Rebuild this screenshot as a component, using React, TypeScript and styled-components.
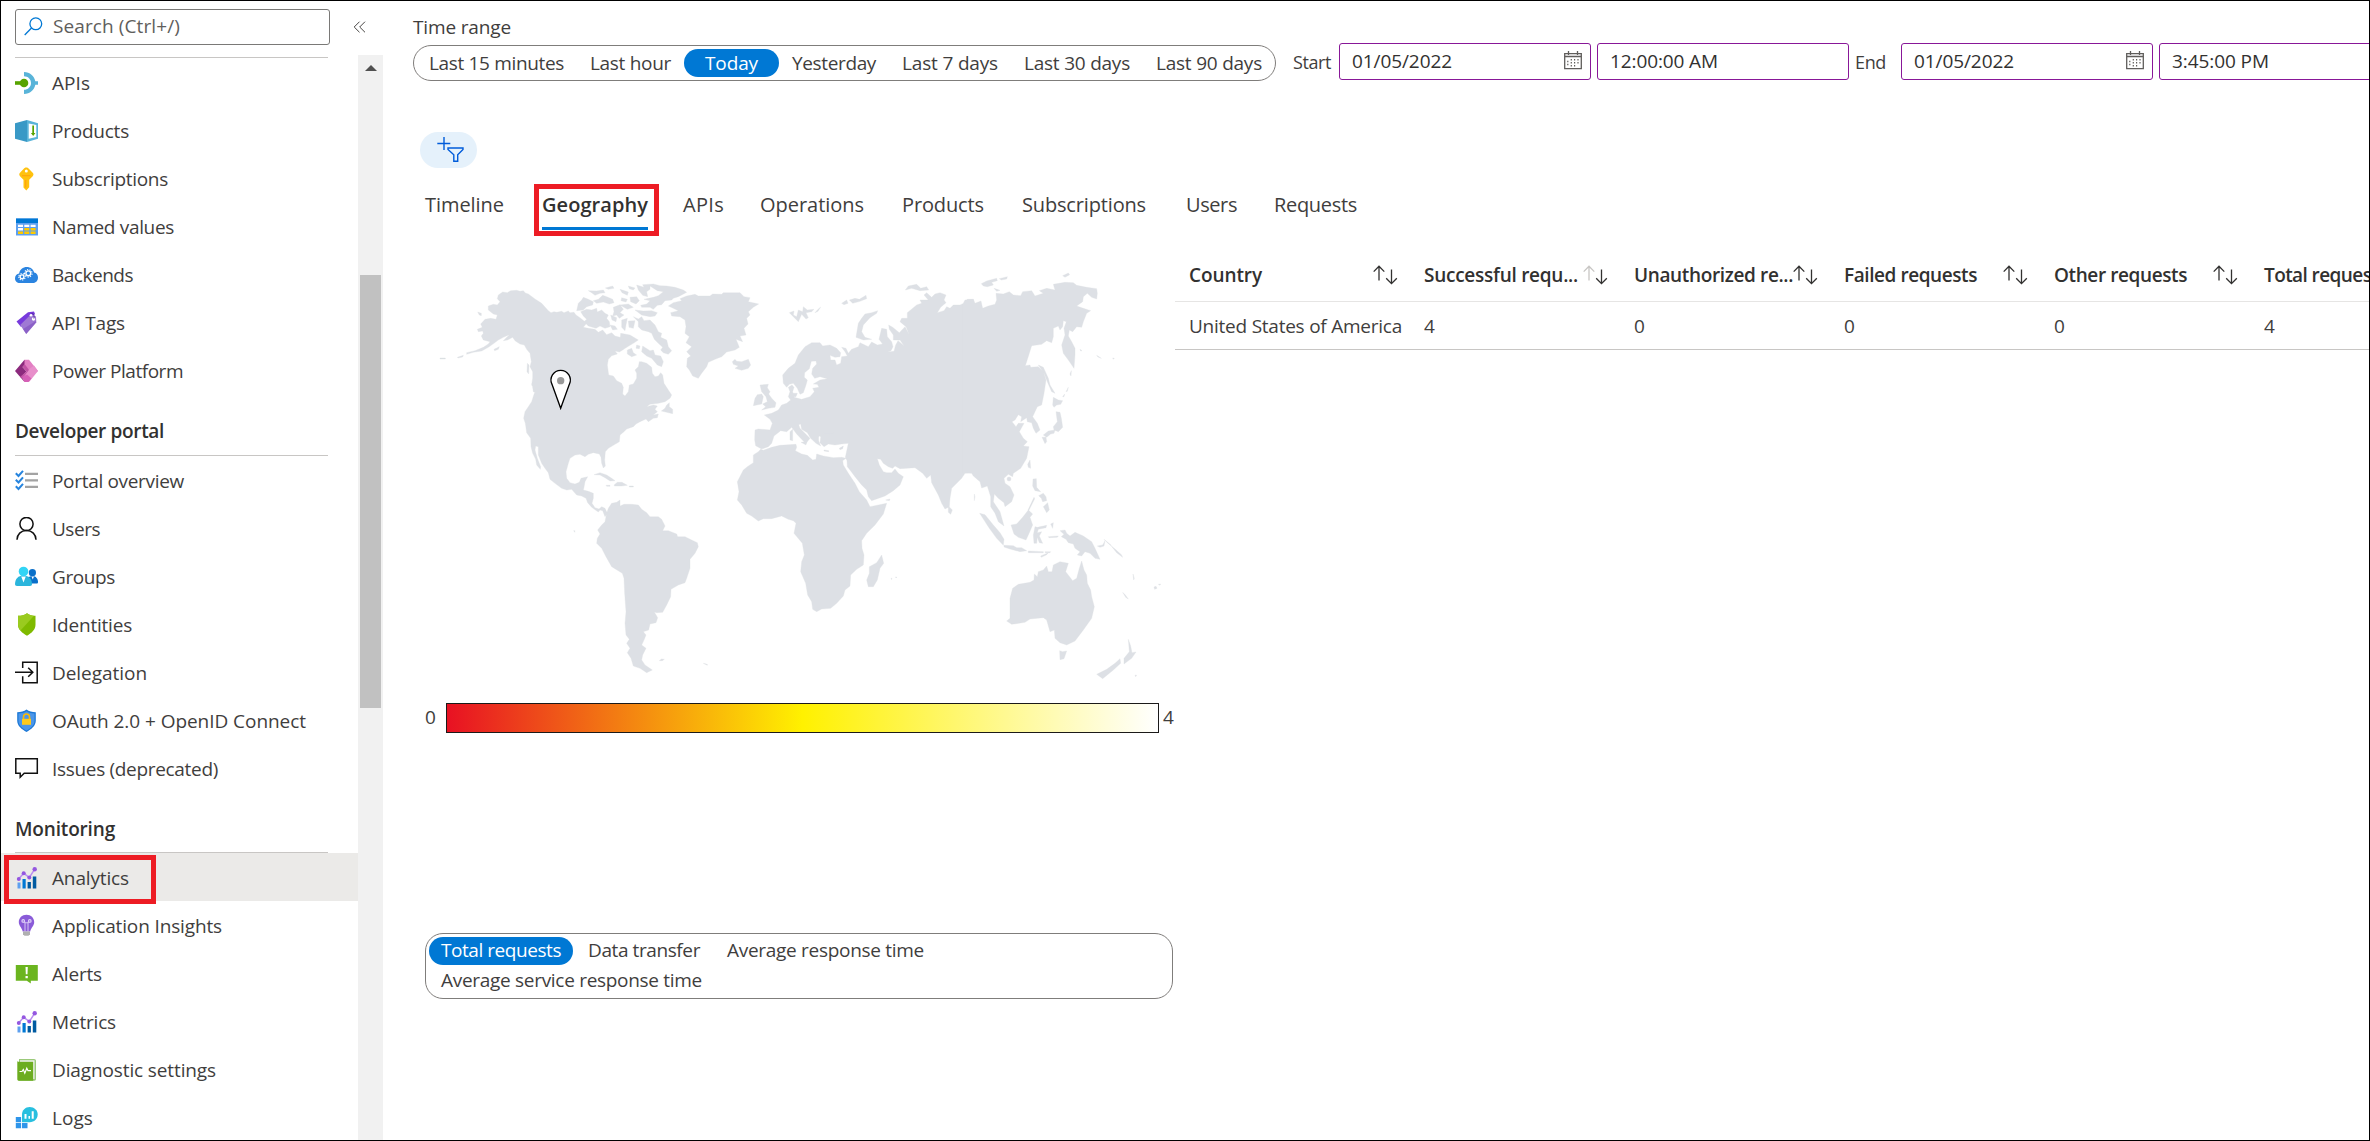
import React, { useLayoutEffect, useRef, useState } from "react";
import styled, { createGlobalStyle } from "styled-components";

const GlobalStyle = createGlobalStyle`
  *, *::before, *::after { box-sizing: border-box; }
  body { margin: 0; background: #fff; }
`;

const Shell = styled.div`
  display: flex;
  width: 2370px;
  height: 1141px;
  border: 1px solid #000;
  overflow: hidden;
  background: #fff;
  color: #3f3e3d;
  font-family: "Open Sans", "Noto Sans", sans-serif;
  font-size: 19px;
  line-height: 28px;
`;

/* ---------- text fitted to a known width by tracking ---------- */

const FitSpan = styled.span<{ $w: number }>`
  display: block;
  flex: none;
  width: ${(p) => p.$w}px;
  white-space: nowrap;
`;

function Fit({ w, children }: { w: number; children: string }) {
  const ref = useRef<HTMLSpanElement>(null);
  const [tracking, setTracking] = useState(0);
  useLayoutEffect(() => {
    const node = ref.current;
    if (node) setTracking((w - node.getBoundingClientRect().width) / children.length);
  }, [w, children]);
  return (
    <FitSpan $w={w}>
      <span ref={ref} style={{ letterSpacing: tracking }}>
        {children}
      </span>
    </FitSpan>
  );
}

/* ---------- sidebar ---------- */

const Sidebar = styled.aside`
  display: flex;
  flex-direction: column;
  flex: none;
  width: 382px;
`;

const SearchRow = styled.div`
  display: flex;
  flex: none;
  height: 54px;
  padding: 8px 0 0 14px;
`;

const SearchBox = styled.div`
  display: flex;
  align-items: center;
  width: 315px;
  height: 36px;
  padding-left: 8px;
  gap: 10px;
  border: 1px solid #7a7977;
  border-radius: 3px;
  color: #605e5c;
  line-height: 32px;
  padding-bottom: 2px;
`;

const Collapse = styled.div`
  margin: 12px 0 0 23px;
  line-height: 0;
`;

const SideBody = styled.div`
  display: flex;
  flex: 1;
  min-height: 0;
`;

const Menu = styled.nav`
  width: 357px;
  padding-top: 2px;
  overflow: hidden;
`;

const Rule = styled.div`
  width: 313px;
  height: 1px;
  margin: 0 0 1px 14px;
  background: #c8c6c4;
`;

const Heading = styled.div<{ $top: number }>`
  width: 313px;
  height: 61px;
  margin-left: 14px;
  padding-top: ${(p) => p.$top}px;
  border-bottom: 1px solid #c8c6c4;
  font-weight: 600;
  color: #323130;
`;

const MenuItem = styled.div<{ $active?: boolean; $drop?: number }>`
  position: relative;
  display: flex;
  align-items: center;
  height: 48px;
  padding: ${(p) => p.$drop ?? 0}px 0 0 14px;
  gap: 13px;
  background: ${(p) => (p.$active ? "#ebeae8" : "transparent")};
`;

const Callout = styled.div<{ $x: number; $y: number; $w: number; $h: number }>`
  position: absolute;
  left: ${(p) => p.$x}px;
  top: ${(p) => p.$y}px;
  width: ${(p) => p.$w}px;
  height: ${(p) => p.$h}px;
  border: 5px solid #ed1c24;
  z-index: 2;
`;

const Scrollbar = styled.div`
  display: flex;
  flex-direction: column;
  align-items: center;
  width: 25px;
  padding-top: 10px;
  background: #f1f1f1;
`;

const ArrowUp = styled.div`
  border-left: 6px solid transparent;
  border-right: 6px solid transparent;
  border-bottom: 6px solid #505050;
`;

const Thumb = styled.div`
  width: 21px;
  height: 433px;
  margin: 204px 2px 0 2px;
  background: #c1c1c1;
`;

/* ---------- main ---------- */

const Main = styled.main`
  position: relative;
  flex: 1;
  min-width: 0;
  overflow: hidden;
`;

const TimeRow = styled.div`
  display: flex;
  width: 2100px;
  height: 80px;
  padding-left: 30px;
`;

const RangeColumn = styled.div`
  width: 863px;
  padding-top: 12px;
`;

const PillGroup = styled.div`
  display: flex;
  align-items: center;
  height: 36px;
  margin-top: 4px;
  padding-left: 2px;
  border: 1px solid #7f7d7b;
  border-radius: 18px;
`;

const Pill = styled.div<{ $on?: boolean; $pad?: number; $line?: number }>`
  height: 28px;
  padding: 0 ${(p) => p.$pad ?? 13}px;
  border-radius: 14px;
  line-height: ${(p) => p.$line ?? 28}px;
  background: ${(p) => (p.$on ? "#0078d4" : "transparent")};
  color: ${(p) => (p.$on ? "#fff" : "inherit")};
`;

const DateCaption = styled.div<{ $w: number; $left: number }>`
  width: ${(p) => p.$w}px;
  padding: 47px 0 0 ${(p) => p.$left}px;
  font-size: 18px;
`;

const Field = styled.div`
  display: flex;
  flex: none;
  align-items: center;
  justify-content: space-between;
  width: 252px;
  height: 37px;
  margin: 42px 6px 0 0;
  padding: 0 8px 2px 12px;
  border: 1px solid #881798;
  border-radius: 3px;
  color: #323130;
`;

const FilterButton = styled.div`
  display: flex;
  width: 57px;
  height: 36px;
  margin: 51px 0 0 37px;
  padding: 4px 0 0 16px;
  border-radius: 18px;
  background: #e5f1fb;
`;

const Tabs = styled.div`
  display: flex;
  height: 68px;
  padding: 22px 0 0 42px;
  font-size: 20px;
`;

const Tab = styled.div<{ $gap?: number; $on?: boolean }>`
  position: relative;
  height: 40px;
  margin-right: ${(p) => p.$gap ?? 38}px;
  padding-top: 1px;
  font-weight: ${(p) => (p.$on ? 600 : 400)};
  color: ${(p) => (p.$on ? "#323130" : "inherit")};
  border-bottom: 3px solid ${(p) => (p.$on ? "#0078d4" : "transparent")};
`;

const Content = styled.div`
  display: flex;
  height: 905px;
`;

const GeoColumn = styled.section`
  flex: none;
  width: 792px;
  padding: 14px 0 0 37px;
`;

const MapSvg = styled.svg`
  display: block;
  width: 753px;
  height: 440px;
`;

const Legend = styled.div`
  display: flex;
  align-items: center;
  height: 30px;
  margin-top: 13px;
  padding-left: 5px;
  line-height: 26px;
`;

const LegendValue = styled.div`
  height: 28px;
`;

const GradientBar = styled.div`
  width: 713px;
  height: 30px;
  margin: 0 4px 0 10px;
  border: 1px solid #1b1a19;
  background: linear-gradient(90deg, #e81123, #fff100 50%, #fff);
`;

const MetricGroup = styled.div`
  display: flex;
  flex-wrap: wrap;
  align-content: flex-start;
  width: 748px;
  height: 66px;
  margin: 200px 0 0 5px;
  padding: 3px 150px 0 3px;
  gap: 2px 3px;
  border: 1px solid #7f7d7b;
  border-radius: 18px;
`;

const Table = styled.section`
  flex: none;
  width: 1285px;
  padding-top: 13px;
`;

const TableRow = styled.div<{ $head?: boolean }>`
  display: grid;
  grid-template-columns: 235px repeat(5, 210px);
  align-items: center;
  height: ${(p) => (p.$head ? 53 : 48)}px;
  border-bottom: 1px solid ${(p) => (p.$head ? "#e6e5e4" : "#c8c6c4")};
  font-weight: ${(p) => (p.$head ? 600 : 400)};
  color: ${(p) => (p.$head ? "#323130" : "inherit")};
`;

const Cell = styled.div`
  display: flex;
  align-items: center;
  justify-content: space-between;
  padding: 0 12px 0 14px;
`;

/* ---------- icons ---------- */

const Icon = styled.svg`
  display: block;
  flex: none;
  width: 24px;
  height: 24px;
`;

const MetricsGlyph = () => (
  <Icon viewBox="0 0 24 24">
    <path fill="#5ea0ef" d="M2.5 16.5h3v6h-3z" />
    <path fill="#0078d4" d="M7.5 13h3.200v9.500H7.500z" />
    <path fill="#005ba1" d="M12.600 16h3.300v6.500h-3.300z" />
    <path fill="#005ba1" d="M17.800 10.500h3.500v12h-3.500z" />
    <path fill="none" stroke="#b98df0" strokeWidth="1.500" d="M3.800 12.800 8.700 7.300l5.700 4.200 5-7.800" />
    <g fill="#9457e0">
      <circle cx="3.800" cy="13" r="2" />
      <circle cx="8.700" cy="7.300" r="2" />
      <circle cx="14.300" cy="11.600" r="2" />
      <circle cx="19.700" cy="3.300" r="2.200" />
    </g>
  </Icon>
);

const icons: Record<string, React.ReactNode> = {
  apis: (
    <Icon viewBox="0 0 24 24">
      <path fill="#59b4d9" d="M9 1c6 0 10.200 4 11.300 9.200H23v3.600h-2.700C19.200 19 15 23 9 23v-4.200c4 0 7-2.900 7-6.800s-3-6.800-7-6.800z" />
      <circle cx="9" cy="12" r="4.300" fill="#57a300" />
      <path fill="#57a300" d="M0 10.200h8v3.600H0z" />
    </Icon>
  ),
  products: (
    <Icon viewBox="0 0 24 24">
      <path fill="#3999c6" d="M0 4.200 12 1v22L0 19.800z" />
      <path fill="#59b4d9" d="M12 1l11 3.200v15.600L12 23z" />
      <path fill="#fff" d="M13.700 4.600l7.600 1.300v12.200l-7.600 1.700z" />
      <path fill="#57a300" d="M17.300 6.500h1.700v7.500h1.400l-2.200 3-2.300-3h1.400z" />
    </Icon>
  ),
  key: (
    <Icon viewBox="0 0 24 24">
      <path fill="#ffc20e" d="M11.300.5c1.400 0 2 .6 3 1.700l3.400 3.600c1 1 1 2.400 0 3.400l-3.500 3.600v7.500L11.300 23.500l-2.800-3v-7.800L5 9.200c-1-1-1-2.400 0-3.400l3.300-3.600c1-1.100 1.700-1.700 3-1.700z" />
      <circle cx="11.300" cy="4" r="1.500" fill="#fff" />
      <path fill="#ff9f0f" d="M7 8h8.500v1.300H7zM10 13h1.300v7.500H10z" opacity=".8" />
    </Icon>
  ),
  table: (
    <Icon viewBox="0 0 24 24">
      <path fill="#5ea0ef" d="M1 3.500h22v17H1z" />
      <path fill="#0078d4" d="M1 3.500h22V8H1z" />
      <path fill="#fff" d="M3 9.700h5V12H3zm6.300 0h5V12h-5zm6.300 0h5V12h-5zM3 13h5v2.500H3z" />
      <path fill="#ffca00" d="M9.300 13h5v2.500h-5zm6.300 0h5v2.500h-5zM3 16.600h5v2.300H3zm6.300 0h5v2.300h-5zm6.300 0h5v2.300h-5z" />
    </Icon>
  ),
  cloud: (
    <Icon viewBox="0 0 24 24">
      <path fill="#2b84e0" d="M4.800 20C2 20 0 17.900 0 15.200c0-2.600 1.800-4.400 4.200-4.700C4.700 6.500 8 4 11.800 4c3.500 0 6.500 2.200 7.300 5.500 2.500.3 3.900 2.400 3.900 5 0 3-2 5.500-5 5.500z" />
      <g fill="none" stroke="#fff" strokeWidth="1.400">
        <circle cx="7" cy="13.800" r="1.900" />
        <circle cx="13.300" cy="10.300" r="2.400" />
        <path strokeWidth="1.100" strokeDasharray="1.200 1.310" d="M3.800 13.800a3.200 3.200 0 1 0 6.400 0a3.200 3.200 0 1 0-6.400 0M9.500 10.300a3.800 3.800 0 1 0 7.600 0a3.800 3.800 0 1 0-7.600 0" />
      </g>
    </Icon>
  ),
  tag: (
    <Icon viewBox="0 0 24 24">
      <path fill="#773adc" d="M13 1.200 19 .5 20 3 6 16 1.500 10.500z" />
      <path fill="#9f79d4" d="M5.200 14 16 3.200l5 2.300.3 5.800L11.200 23z" />
      <path fill="#7f52be" d="M8 18l13-8-.2 2L11.200 23z" opacity=".6" />
      <circle cx="16" cy="4.300" r="1.300" fill="#fff" />
      <circle cx="18.500" cy="8" r="1.700" fill="#fff" />
      <path fill="none" stroke="#552f99" strokeWidth="1" d="M16.500 2.500c2-.5 3 1.500 2.400 5" />
    </Icon>
  ),
  power: (
    <Icon viewBox="0 0 24 24">
      <path fill="#8c2a7d" d="M9.500.8 12 3.500 7.500 8l4 4.500-4 4 3.500 4-1.500 2.500L0 12z" />
      <path fill="#e27fc3" d="M9.500.8H14L23 12l-4.500 3.500-9-9z" />
      <path fill="#c252a5" d="M7.500 8l2-3 5.500 7-6 8-4-2 6.500-5.500z" />
      <path fill="#e88fcb" d="M15 9.500l4-3L23 12l-8.500 10.500-5 .5-2-3.500z" />
      <path fill="#d55fb6" d="M12 15.500l4.500 4-3 3.500H9.700L7 18z" />
    </Icon>
  ),
  checks: (
    <Icon viewBox="0 0 24 24">
      <path fill="none" stroke="#2684de" strokeWidth="2" d="M.8 4.200 3.500 7 8 1.800M.8 10.700l2.700 2.800L8 8.300M.8 17.200 3.500 20 8 14.800" />
      <path fill="#a3a3a3" d="M10 3.800h13v2.200H10zm0 6.500h13v2.200H10zm0 6.500h13V19H10z" />
    </Icon>
  ),
  user: (
    <Icon viewBox="0 0 24 24">
      <g fill="none" stroke="#111" strokeWidth="1.500">
        <circle cx="11.500" cy="7" r="6.600" />
        <path d="M2 22.800c0-5.500 4-9.300 9.500-9.300s9.500 3.800 9.500 9.300" />
      </g>
    </Icon>
  ),
  groups: (
    <Icon viewBox="0 0 24 24">
      <path fill="#0a6fc9" d="M12 18.500c-.5-4.500 1.300-7.500 5.500-7.500 3.600 0 5.500 3 5.500 6 0 1-.5 1.500-1.500 1.500z" />
      <circle cx="17.400" cy="7.700" r="3.600" fill="#0a6fc9" />
      <path fill="#2bb5dc" d="M2 21c-1.300 0-2-.8-2-2C.2 14 3 10.500 8.500 10.500s8.300 3.500 8.500 8.500c0 1.200-.7 2-2 2z" />
      <path fill="#fff" d="M6.200 11.500h4.600l-2.300 6zM16.500 11.500h2.500l-1.200 3z" />
      <circle cx="8.500" cy="6.500" r="4.800" fill="#32d4f5" />
    </Icon>
  ),
  shield: (
    <Icon viewBox="0 0 24 24">
      <path fill="#7fba00" d="M12 .2c2.500 1.800 5.300 2.500 8.500 2.600v9c0 5-4 8.300-8.500 11-4.500-2.700-9-6-9-11v-9C6.500 2.700 9.500 2 12 .2z" />
      <path fill="#9acb1f" d="M12 .2c2 1.400 4.300 2.200 7 2.500L5.500 17.500C4 15.900 3 14 3 11.800v-9C6.500 2.700 9.500 2 12 .2z" />
    </Icon>
  ),
  delegate: (
    <Icon viewBox="0 0 24 24">
      <path fill="none" stroke="#111" strokeWidth="1.500" d="M7.700 7V1.200h14.500v20.500H7.700v-6.500M0 11.300h17.500M13.200 6.800l4.600 4.500-4.600 4.500" />
    </Icon>
  ),
  oauth: (
    <Icon viewBox="0 0 24 24">
      <path fill="#1b78d6" d="M11.500.6c2.500 1.900 5.500 2.600 9.300 2.700v8.500c0 5.200-4.700 8.600-9.300 11.200C7 20.400 2.200 17 2.200 11.800V3.300C6 3.200 9 2.500 11.500.6z" />
      <path fill="#5ea0ef" d="M11.500 2.300c2.200 1.500 4.900 2.200 8 2.300v7.200c0 4.600-4 7.500-8 9.800-4-2.300-8-5.200-8-9.800V4.600c3.200-.1 5.800-.8 8-2.300z" opacity=".75" />
      <path fill="none" stroke="#ffb900" strokeWidth="1.600" d="M8.500 10.500V8a3 3 0 0 1 6 0v2.500" />
      <path fill="#ffca1c" d="M7 9.800h9v6H7z" />
    </Icon>
  ),
  chat: (
    <Icon viewBox="0 0 24 24">
      <path fill="none" stroke="#111" strokeWidth="1.500" d="M.8 1.700h21.500v14.500H9.200l-4 4v-4H.8z" />
    </Icon>
  ),
  metrics: <MetricsGlyph />,
  insights: (
    <Icon viewBox="0 0 24 24">
      <path fill="#8a5bd8" d="M11.500.7c4.500 0 7.700 3.200 7.700 7.300 0 4-3.200 5.500-4 9.500H7.700C7 13.500 3.800 12 3.800 8c0-4.100 3.200-7.300 7.700-7.300z" />
      <g fill="none" stroke="#e3d6f8" strokeWidth="1.100">
        <path d="M10 17.500V8.200H8.500M13 17.500V8.200h1.500M10 8.700h3" opacity=".8" />
        <circle cx="8.200" cy="6.900" r="1.300" />
        <circle cx="14.800" cy="6.900" r="1.300" />
      </g>
      <path fill="#b0b0b0" d="M8 17.500h7v2.700L13.500 21.700h-4L8 20.200z" />
    </Icon>
  ),
  alerts: (
    <Icon viewBox="0 0 24 24">
      <path fill="#6bb51f" d="M.8 3h22v15.700h-7v2.700l-4-2.700H.8z" />
      <path fill="#fff" d="M10.500 5h2.300l-.3 7.300h-1.700zM10.500 14h2.300v2.200h-2.300z" />
    </Icon>
  ),
  diagnostic: (
    <Icon viewBox="0 0 24 24">
      <path fill="#9bc97a" d="M4 1h15c1.300 0 2 .7 2 2v18c0 1-.6 1.700-1.700 1.700H4z" />
      <path fill="#f3f3f3" d="M5 2.300h14.500V21H5z" />
      <path fill="#6cad20" d="M2.300 2.500C2.300 3.600 3 3.800 4 3.800h14.200v18.900H4c-1.200 0-1.700-.7-1.700-1.500z" />
      <path fill="none" stroke="#fff" strokeWidth="1.200" d="M4.500 13.500H7l1.300-2 1.500 3.700 2-5 1.200 2.500h3" />
    </Icon>
  ),
  logs: (
    <Icon viewBox="0 0 24 24">
      <path fill="#2e95ea" d="M.8 11h5.300v5.300H.800zM.800 17h5.300v5.300H.800zM7 17h5.500v5.300H7z" />
      <path fill="#28bfdf" d="M14.700 1c4.500 0 8 3.300 8 7.600s-3.500 7.700-8 7.700H7V8.600C7 4.300 10.300 1 14.700 1z" />
      <path fill="#fff" d="M9.500 8h2v4.700h-2zm4 2h1.500v2.700h-1.500zm3.200-4.700h2v7.400h-2z" />
    </Icon>
  ),
};

const SortIcon = ({ dim }: { dim?: boolean }) => (
  <svg width="25" height="20" viewBox="0 0 25 20" fill="none" stroke="#323130" strokeWidth="1.3">
    <path d="M6 15.500V1.200M.7 6.600 6 1.200l5.300 5.400" stroke={dim ? "#c8c6c4" : "#323130"} />
    <path d="M18.500 4.500v14M13.200 13.200l5.300 5.400 5.300-5.400" />
  </svg>
);

const CalendarIcon = () => (
  <svg width="18" height="19" viewBox="0 0 18 19" fill="none" stroke="#605e5c">
    <path strokeWidth="1.300" d="M.7 2.700h16.600v15H.7z" />
    <path strokeWidth="1.300" d="M.7 5.500h16.600M4.500 0v4M13.500 0v4" />
    <path strokeWidth="1.200" strokeDasharray="1.500 1.500" d="M3.800 9.800v6M7.300 8v8M10.600 8v8M14 8v6" />
  </svg>
);

/* ---------- world map ---------- */

const americas = [
  "235,135 248,126 262,128 272,122 290,121 300,124 310,122 316,129 325,132 345,147 365,160 385,182 393,188 402,185 410,187 425,184 432,188 445,183 450,188 462,187 468,195 480,203 492,213 498,222 490,232 505,235 525,238 535,247 548,240 560,254 575,248 585,258 600,262 612,255 625,262 622,270 635,268 630,280 620,292 608,300 598,306 585,303 592,312 575,317 565,328 562,345 566,375 580,378 590,392 605,400 610,412 608,432 615,438 625,425 628,405 640,402 650,385 650,370 645,360 655,350 658,335 665,335 680,340 695,352 697,370 705,380 715,378 722,368 728,375 732,400 745,420 755,435 750,445 735,455 715,460 690,463 680,470 700,465 712,468 705,478 712,485 700,495 715,492 712,503 700,505 685,515 678,507 660,515 648,522 640,530 620,537 612,545 600,555 598,575 585,583 565,595 556,605 554,630 556,648 550,654 545,640 543,622 538,612 520,608 505,613 495,620 480,613 465,615 450,625 445,640 438,665 440,685 450,698 465,702 478,697 483,685 503,680 495,695 492,712 490,720 505,724 520,730 520,745 516,760 525,773 537,777 545,770 555,775 562,790 555,800 548,782 540,780 535,786 515,772 503,758 498,745 485,738 470,735 455,718 440,720 425,715 405,700 390,688 385,668 375,655 365,640 355,615 355,590 347,588 345,600 352,625 362,650 361,658 350,645 347,628 338,610 333,590 332,565 320,548 316,520 311,505 315,485 325,470 335,455 343,430 350,425 335,405 338,385 338,365 330,350 334,335 330,310 320,298 313,285 300,282 285,272 278,262 262,270 250,272 268,254 250,262 235,270 222,280 205,292 185,303 160,307 140,313 140,308 165,302 190,292 205,282 210,275 190,270 184,258 190,250 188,243 175,245 172,238 187,232 182,222 195,208 212,205 228,208 232,195 220,192 205,180 205,168 220,163 232,165 240,155 232,146",
  "470,182 475,160 485,150 490,142 505,148 520,155 518,165 500,170 490,180",
  "482,185 500,178 515,180 530,175 532,186 545,180 555,190 565,195 560,205 568,215 570,230 555,235 540,228 528,235 505,228 492,215 500,208 490,198",
  "505,122 530,123 550,120 555,128 540,130 525,136 515,128",
  "520,152 535,148 548,136 560,140 578,148 582,158 568,162 550,156 530,160",
  "556,114 578,108 582,115 565,118",
  "600,118 625,126 622,136 606,128",
  "625,108 645,114 640,120 628,116",
  "580,172 600,164 610,178 600,188 612,195 598,205 590,195 578,198 582,185",
  "605,143 622,148 618,156 603,152",
  "630,142 650,140 658,152 648,162 632,155",
  "600,165 625,162 640,172 622,178",
  "645,180 670,183 695,182 712,188 705,198 690,200 665,195",
  "650,105 672,112 668,104 700,102 720,107 740,108 765,112 790,120 800,127 775,140 760,145 755,150 735,152 725,164 712,166 700,178 690,172 665,172 662,166 680,162 690,152 672,148 700,142 715,137 730,125 712,122 690,108 690,118 680,125 683,140 668,136 655,120",
  "640,200 655,207 665,200 672,212 690,210 705,225 715,245 725,250 722,262 740,270 745,290 755,302 745,313 730,308 722,300 728,292 715,280 703,268 695,250 685,245 665,240 655,230 655,215",
  "668,288 690,302 700,300 705,315 722,318 730,335 725,350 712,345 695,325 680,318 665,305",
  "622,300 635,295 640,308 650,315 635,320 622,312",
  "605,210 622,205 618,225 615,242 605,232",
  "625,213 645,212 640,235 627,232",
  "572,195 590,203 588,215 576,210",
  "570,225 585,228 592,238 578,240",
  "602,250 630,255 655,270 640,280 620,292 600,280",
  "650,285 660,288 658,296 648,295",
  "745,168 760,158 785,152 780,146 800,138 825,133 835,138 870,138 878,132 905,133 910,128 960,128 972,140 990,143 985,155 1016,162 1000,172 985,185 990,195 980,205 984,222 972,235 975,245 978,255 960,258 968,275 948,268 958,292 945,300 920,306 905,320 885,328 865,337 860,350 845,370 835,385 818,378 808,360 800,350 802,325 812,318 800,305 815,290 798,278 808,260 795,250 798,230 795,210 780,200 755,198 752,188 775,182 760,175",
  "937,335 945,328 950,334 965,335 985,328 992,345 985,355 965,361 945,355 955,348 940,343",
  "740,465 748,458 748,470 758,478 758,491 740,487 724,483 735,475",
  "522,674 540,668 560,675 575,685 585,692 570,693 555,683 540,675",
  "583,704 592,697 606,697 622,706 605,708 583,708",
  "628,708 640,708 640,711 628,711",
  "558,706 570,706 570,709 560,709",
  "112,322 130,316 128,321 114,324",
  "60,324 76,324 76,327 60,327",
  "222,298 238,290 235,298 224,302",
  "336,400 350,418 352,432 340,425",
  "173,186 184,190 184,197 178,195",
  "322,340 327,345 326,372 321,365",
  "560,790 565,775 575,760 590,757 600,750 600,768 612,763 635,763 655,765 665,778 680,788 690,800 715,800 725,808 735,828 728,842 745,842 770,852 773,860 795,860 815,870 832,878 835,890 825,910 810,928 810,955 800,985 795,998 775,1005 753,1018 752,1040 740,1065 728,1087 710,1088 703,1086 713,1103 708,1118 690,1122 686,1140 670,1145 678,1155 672,1170 665,1185 678,1195 668,1215 665,1230 675,1245 697,1260 680,1268 660,1255 640,1248 633,1225 622,1208 630,1195 620,1180 628,1168 618,1155 615,1120 618,1085 614,1030 612,985 607,970 575,950 558,920 545,895 530,880 532,865 540,852 533,840 545,825 555,815",
  "718,1232 724,1227 733,1228 727,1232",
  "850,1240 862,1243 862,1246",
  "461,842 465,842 464,847",
];

const africaEurope = [
  "122,598 130,601 155,592 180,586 228,583 230,592 226,602 245,612 262,616 278,630 288,628 290,612 310,618 340,623 365,622 378,625 368,632 370,645 385,670 405,700 418,725 440,750 450,770 475,765 500,760 490,792 465,825 440,850 425,872 426,895 432,915 430,945 410,958 392,975 390,1008 375,1020 370,1038 350,1060 332,1075 305,1077 290,1085 278,1078 275,1055 263,1035 257,1000 242,965 245,935 253,915 247,880 222,850 228,820 220,812 205,808 185,798 155,806 130,806 115,813 95,798 80,790 65,765 52,750 57,725 52,695 70,660 82,650 100,638 100,615 115,605",
  "485,915 491,940 480,955 472,990 460,1010 445,1010 440,990 448,970 448,950 470,938",
  "107,587 104,570 105,540 115,537 150,540 157,520 150,508 133,495 155,490 175,480 185,465 200,460 212,450 205,440 210,425 205,412 216,405 222,412 218,425 222,442 245,448 270,440 283,425 278,415 297,412 292,403 280,402 300,390 322,386 300,380 284,385 275,372 278,355 290,342 288,333 274,334 268,356 254,368 253,382 262,390 258,405 250,428 240,433 232,415 220,400 208,403 200,412 190,400 188,375 205,355 225,340 235,315 255,290 275,278 300,278 308,288 330,285 350,295 362,308 360,320 345,322 330,316 332,330 345,330 350,345 362,340 365,320 382,318 375,305 365,292 378,295 385,310 395,298 415,290 420,278 430,283 445,290 455,276 472,285 488,282 477,268 485,235 500,238 502,260 515,275 519,290 513,302 503,306 522,304 527,285 534,272 552,287 540,270 520,270 520,255 508,238 506,225 518,232 538,248 555,230 568,255 558,230 540,215 545,205 562,205 562,188 590,165 605,160 600,150 625,150 612,135 620,128 635,142 645,132 660,128 678,135 672,150 678,158 662,172 652,188 672,182 680,170 690,175 700,165 720,165 735,158 742,148 760,148 760,668 735,670 725,685 695,715 690,745 688,770 675,777 665,760 655,735 635,698 632,675 620,685 608,670 585,653 540,656 525,648 518,655 505,650 490,640 482,628 472,626 478,645 490,665 500,668 515,668 525,657 535,670 550,680 540,705 520,722 495,738 455,752 445,740 440,720 425,705 405,680 390,660 382,650 381,632 376,622 385,580 365,582 345,585 325,582 312,590 300,578 302,562 298,555 312,548 340,548 325,555 308,552 302,556 296,560 296,572 302,588 288,580 272,565 262,548 245,538 242,522 236,524 240,535 255,550 270,565 262,575 258,582 245,568 230,552 215,532 200,545 182,542 162,558 155,580 145,590 125,597",
  "210,545 218,538 218,572 210,570",
  "243,577 260,575 258,585",
  "358,595 370,588 368,596 360,599",
  "312,600 326,602 326,605 312,603",
  "120,405 145,403 142,413 150,425 146,432 155,445 168,458 165,472 145,475 125,480 137,470 128,462 142,455 138,440 125,425",
  "105,445 112,434 125,432 130,440 125,462 100,467",
  "208,430 232,430 228,440 212,440",
  "208,188 222,183 220,195 230,200 235,180 248,185 250,170 262,180 282,178 275,185 258,188 265,203 258,207 245,193 235,215 220,200",
  "285,188 292,180 302,171 294,184",
  "365,160 380,150 384,160 372,164",
  "388,150 405,145 418,148 438,136 440,146 420,154 398,160",
  "473,182 470,190 450,203 430,225 425,245 435,262 455,268 430,270 408,262 412,238 415,220 425,205 435,192 455,188",
  "685,768 697,780 692,793 685,787",
  "513,985 516,985 515,989",
  "526,981 530,981 529,984",
  "497,750 510,747 508,752",
];

const asiaPacific = [
  "190,670 190,160 195,150 220,148 225,160 243,153 248,175 265,168 285,163 290,150 288,130 310,132 328,125 340,135 362,137 368,125 395,122 405,138 430,130 418,122 440,115 465,120 460,103 495,97 520,98 530,106 560,112 590,116 592,130 590,147 575,142 562,130 550,140 548,155 530,168 550,175 572,182 560,190 550,215 545,232 530,230 518,245 508,240 505,258 515,275 525,295 525,315 522,355 505,330 490,310 485,285 495,255 492,235 499,215 490,212 488,230 480,240 475,228 460,235 460,260 455,278 440,272 425,283 395,287 388,310 376,347 390,345 392,352 415,350 430,365 438,390 432,430 425,465 412,470 405,485 398,500 412,520 420,540 408,550 400,535 395,518 382,515 380,503 362,515 365,500 355,494 345,510 336,515 348,530 355,520 372,520 358,545 370,565 382,575 370,588 387,590 380,625 362,655 340,670 338,680 325,673 312,685 315,700 330,710 342,735 335,755 315,770 312,758 295,745 283,732 280,755 300,785 312,828 295,815 285,790 272,770 272,740 262,708 245,714 240,695 220,678 215,670 195,668",
  "415,345 430,352 445,385 450,405 465,430 455,425 442,395 432,370",
  "460,442 475,450 488,452 482,463 470,465 462,472 458,465",
  "468,485 480,487 484,505 488,532 475,545 462,540 460,530 472,515",
  "430,555 445,543 465,540 462,550 452,552 440,562",
  "426,562 438,562 440,575 435,581 430,570",
  "390,630 392,655 385,652 383,643",
  "399,687 409,686 410,712 422,725 405,722 398,708",
  "416,737 430,730 438,740 440,752 428,755 424,745",
  "430,770 443,758 448,780 440,788",
  "402,742 404,746 386,782 384,780",
  "333,825 350,822 368,802 385,780 398,792 390,802 398,825 388,848 378,870 355,862 342,852",
  "239,790 255,794 280,825 300,848 312,868 310,886 290,865 268,835",
  "312,886 340,887 350,893 365,893 380,902 360,905 330,897 312,891",
  "385,903 430,905 430,908 385,908",
  "435,905 452,905 450,908 436,908",
  "422,918 445,908 440,914 424,922",
  "405,830 412,832 440,826 438,833 415,838 412,848 425,845 418,858 428,880 418,878 412,862 410,880 402,880 400,855",
  "452,822 460,818 458,835",
  "445,860 475,858 472,862 447,863",
  "480,842 495,840 500,850 510,858 525,847 550,858 575,875 585,895 600,928 585,925 570,910 555,905 545,918 532,915 540,905 525,895 520,882 505,878 498,868 484,860 492,853",
  "592,888 608,885 615,872 612,888 600,892",
  "612,868 622,878 634,888 632,884",
  "634,888 650,908 668,922 664,914 646,898",
  "320,1113 330,1105 330,1045 338,1015 355,1003 390,997 402,990 403,972 412,980 415,965 430,960 440,948 445,965 456,965 460,945 480,935 505,940 497,965 518,992 530,985 538,955 545,933 552,960 560,975 562,1000 572,1020 575,1040 583,1070 575,1105 550,1140 525,1173 500,1185 480,1178 465,1165 463,1140 450,1145 447,1135 440,1110 430,1103 390,1107 375,1117 335,1123",
  "479,1202 488,1205 500,1203 492,1226 480,1229",
  "685,1168 692,1188 696,1208 708,1206 695,1225 672,1242 672,1225 688,1205",
  "660,1226 662,1240 640,1260 608,1286 590,1273 620,1258 645,1240",
  "668,1027 676,1035 685,1047 677,1042",
  "699,972 703,985 701,990",
  "762,1011 768,1009 771,1015 764,1018",
  "775,1003 782,1002 780,1006",
  "244,101 260,93 290,85 292,92 275,97 280,105 262,110 250,108",
  "298,86 322,80 320,87 304,90",
  "282,115 300,121 290,124",
  "488,77 505,69 509,74 495,82",
  "16,120 25,108 50,103 62,115 80,110 86,120 60,122 35,115",
  "540,298 546,302 542,303",
  "590,316 604,325 594,321",
  "638,324 643,325 640,328",
  "510,372 514,362 513,378",
  "498,425 505,412 502,424",
  "488,440 494,432 492,440",
  "223,732 225,740 223,752",
  "705,1275 710,1276 707,1280",
];

const toPath = (list: string[]) => list.map((p) => `M${p}Z`).join("");

const WorldMap = () => (
  <MapSvg viewBox="0 0 2259 1320">
    <g fill="#dde0e5" stroke="#dde0e5" strokeWidth="1" strokeLinejoin="round">
      <path d={toPath(americas)} />
      <path d={toPath(africaEurope)} transform="translate(900 0)" />
      <path d={toPath(asiaPacific)} transform="translate(1440 0)" />
      <circle cx="1767" cy="687" r="6" />
    </g>
    <path d="M422 475 396 403a29 29 0 1 1 52 0z" fill="#fff" stroke="#000" strokeWidth="4" />
    <circle cx="422" cy="392" r="11" fill="#999" />
  </MapSvg>
);

/* ---------- data ---------- */

type Entry = [icon: string, label: string, width: number];

const apiItems: Entry[] = [
  ["apis", "APIs", 38],
  ["products", "Products", 77],
  ["key", "Subscriptions", 116],
  ["table", "Named values", 122],
  ["cloud", "Backends", 81],
  ["tag", "API Tags", 73],
  ["power", "Power Platform", 131],
];
const portalItems: Entry[] = [
  ["checks", "Portal overview", 132],
  ["user", "Users", 48],
  ["groups", "Groups", 63],
  ["shield", "Identities", 80],
  ["delegate", "Delegation", 95],
  ["oauth", "OAuth 2.0 + OpenID Connect", 254],
  ["chat", "Issues (deprecated)", 166],
];
const monitoringItems: Entry[] = [
  ["metrics", "Analytics", 77],
  ["insights", "Application Insights", 170],
  ["alerts", "Alerts", 50],
  ["metrics", "Metrics", 64],
  ["diagnostic", "Diagnostic settings", 164],
  ["logs", "Logs", 41],
];

const ranges: [string, number][] = [
  ["Last 15 minutes", 135],
  ["Last hour", 81],
  ["Today", 53],
  ["Yesterday", 84],
  ["Last 7 days", 96],
  ["Last 30 days", 106],
  ["Last 90 days", 106],
];

const tabs: [string, number, number][] = [
  ["Timeline", 79, 38],
  ["Geography", 106, 35],
  ["APIs", 41, 36],
  ["Operations", 104, 38],
  ["Products", 82, 38],
  ["Subscriptions", 124, 40],
  ["Users", 51, 37],
  ["Requests", 83, 0],
];

const columns: [string, number][] = [
  ["Country", 73],
  ["Successful requ...", 154],
  ["Unauthorized re...", 159],
  ["Failed requests", 133],
  ["Other requests", 133],
  ["Total requests", 123],
];

const values: [string, number][] = [
  ["United States of America", 213],
  ["4", 11],
  ["0", 11],
  ["0", 11],
  ["0", 11],
  ["4", 11],
];

const metrics: [string, number][] = [
  ["Total requests", 120],
  ["Data transfer", 112],
  ["Average response time", 197],
  ["Average service response time", 261],
];

const MenuGroup = ({ items, drop }: { items: Entry[]; drop?: number }) => (
  <>
    {items.map(([icon, label, width]) => (
      <MenuItem key={label} $active={label === "Analytics"} $drop={drop}>
        {icons[icon]}
        <Fit w={width}>{label}</Fit>
        {label === "Analytics" && <Callout $x={3} $y={2} $w={152} $h={49} />}
      </MenuItem>
    ))}
  </>
);

export default function App() {
  return (
    <>
      <GlobalStyle />
      <Shell>
        <Sidebar>
          <SearchRow>
            <SearchBox>
              <svg width="19" height="19" viewBox="0 0 19 19" fill="none" stroke="#0078d4" strokeWidth="1.300">
                <circle cx="11.800" cy="6.800" r="5.900" />
                <path d="M7.500 11 .7 18" />
              </svg>
              <Fit w={127}>Search (Ctrl+/)</Fit>
            </SearchBox>
            <Collapse>
              <svg width="13" height="12" viewBox="0 0 13 12" fill="none" stroke="#484644" strokeWidth="1">
                <path d="M6.500.7 1.200 6l5.300 5.300M12 .7 6.700 6l5.300 5.300" />
              </svg>
            </Collapse>
          </SearchRow>
          <SideBody>
            <Menu>
              <Rule />
              <MenuGroup items={apiItems} />
              <Heading $top={22}>
                <Fit w={149}>Developer portal</Fit>
              </Heading>
              <MenuGroup items={portalItems} drop={2} />
              <Heading $top={23}>
                <Fit w={100}>Monitoring</Fit>
              </Heading>
              <MenuGroup items={monitoringItems} drop={2} />
            </Menu>
            <Scrollbar>
              <ArrowUp />
              <Thumb />
            </Scrollbar>
          </SideBody>
        </Sidebar>

        <Main>
          <TimeRow>
            <RangeColumn>
              <Fit w={98}>Time range</Fit>
              <PillGroup>
                {ranges.map(([label, width]) => (
                  <Pill key={label} $on={label === "Today"} $pad={label === "Today" ? 21 : 13}>
                    <Fit w={width}>{label}</Fit>
                  </Pill>
                ))}
              </PillGroup>
            </RangeColumn>
            <DateCaption $w={63} $left={17}>
              <Fit w={38}>Start</Fit>
            </DateCaption>
            <Field>
              <Fit w={100}>01/05/2022</Fit>
              <CalendarIcon />
            </Field>
            <Field>
              <Fit w={108}>12:00:00 AM</Fit>
            </Field>
            <DateCaption $w={46} $left={0}>
              <Fit w={31}>End</Fit>
            </DateCaption>
            <Field>
              <Fit w={100}>01/05/2022</Fit>
              <CalendarIcon />
            </Field>
            <Field>
              <Fit w={97}>3:45:00 PM</Fit>
            </Field>
          </TimeRow>

          <FilterButton>
            <svg width="29" height="28" viewBox="0 0 29 28" fill="none" stroke="#015cda" strokeWidth="1.400">
              <path d="M8 1v13M1.300 7.500h13" />
              <path d="M12 12h15v1.500l-5.300 5.300v6.500h-3.900v-6.500L12 13.500z" />
            </svg>
          </FilterButton>

          <Tabs>
            {tabs.map(([label, width, gap]) => (
              <Tab key={label} $gap={gap} $on={label === "Geography"}>
                <Fit w={width}>{label}</Fit>
                {label === "Geography" && <Callout $x={-8} $y={-6} $w={125} $h={52} />}
              </Tab>
            ))}
          </Tabs>

          <Content>
            <GeoColumn>
              <WorldMap />
              <Legend>
                <LegendValue>
                  <Fit w={11}>0</Fit>
                </LegendValue>
                <GradientBar />
                <LegendValue>
                  <Fit w={11}>4</Fit>
                </LegendValue>
              </Legend>
              <MetricGroup>
                {metrics.map(([label, width], i) => (
                  <Pill key={label} $on={i === 0} $pad={12} $line={26}>
                    <Fit w={width}>{label}</Fit>
                  </Pill>
                ))}
              </MetricGroup>
            </GeoColumn>
            <Table>
              <TableRow $head>
                {columns.map(([label, width], i) => (
                  <Cell key={label}>
                    <Fit w={width}>{label}</Fit>
                    <SortIcon dim={i === 1} />
                  </Cell>
                ))}
              </TableRow>
              <TableRow>
                {values.map(([value, width], i) => (
                  <Cell key={i}>
                    <Fit w={width}>{value}</Fit>
                  </Cell>
                ))}
              </TableRow>
            </Table>
          </Content>
        </Main>
      </Shell>
    </>
  );
}
